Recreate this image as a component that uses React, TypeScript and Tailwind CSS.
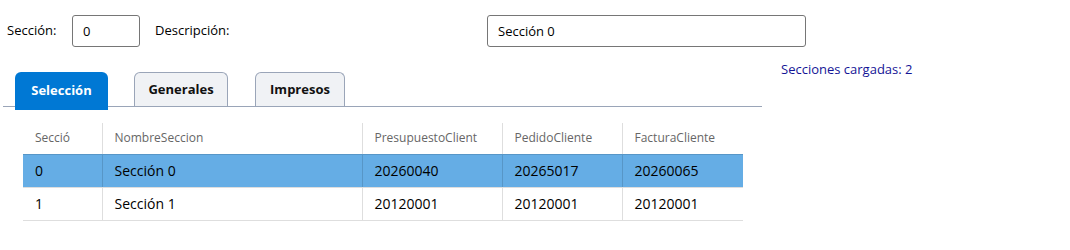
import React from 'react';

const rows = [
  { id: '0', nombre: 'Sección 0', presupuesto: '20260040', pedido: '20265017', factura: '20260065' },
  { id: '1', nombre: 'Sección 1', presupuesto: '20120001', pedido: '20120001', factura: '20120001' },
];

export default function App() {
  const selected = '0';

  return (
    <div className="w-[1070px] h-[250px] bg-white text-black font-['Open_Sans',sans-serif] text-[13px] overflow-hidden">
      {/* cabecera */}
      <div className="flex items-center pt-[15px] pl-[7px] h-[47px]">
        <span className="w-[65px]">Sección:</span>
        <input
          readOnly
          value="0"
          className="w-[68px] h-[32px] border border-[#767676] rounded-[3px] px-[10px] text-[13px] outline-none"
        />
        <span className="ml-[15px] w-[332px]">Descripción:</span>
        <input
          readOnly
          value="Sección 0"
          className="w-[319px] h-[32px] border border-[#767676] rounded-[3px] px-[10px] text-[13px] outline-none"
        />
      </div>

      <div className="flex">
        <div className="ml-[3px] w-[759px] pt-[25px]">
          {/* tabs */}
          <div className="flex items-end h-[35px] border-b border-[#9aa5b8]">
            <div className="ml-[12px] w-[93px] h-[38px] -mb-[4px] bg-[#0078d4] rounded-t-[6px] text-white font-bold flex items-center justify-center pb-[1px]">
              Selección
            </div>
            <div className="ml-[26px] w-[94px] h-[34px] bg-[#f0f2f5] border border-b-0 border-[#9aa5b8] rounded-t-[6px] font-bold text-[#111] flex items-center justify-center pt-[1px]">
              Generales
            </div>
            <div className="ml-[27px] w-[90px] h-[34px] bg-[#f0f2f5] border border-b-0 border-[#9aa5b8] rounded-t-[6px] font-bold text-[#111] flex items-center justify-center pt-[1px]">
              Impresos
            </div>
          </div>

          {/* tabla */}
          <table className="ml-[20px] mt-[16px] w-[720px] border-collapse table-fixed">
            <colgroup>
              <col className="w-[79px]" />
              <col className="w-[260px]" />
              <col className="w-[140px]" />
              <col className="w-[120px]" />
              <col className="w-[121px]" />
            </colgroup>
            <thead>
              <tr className="h-[31px] border-b border-black/[0.13]">
                <th className="px-3 text-left font-normal text-[12px] text-[#666]">Secció</th>
                <th className="px-3 text-left font-normal text-[12px] text-[#666] border-l border-black/[0.13]">NombreSeccion</th>
                <th className="px-3 text-left font-normal text-[12px] text-[#666] border-l border-black/[0.13]">PresupuestoClient</th>
                <th className="px-3 text-left font-normal text-[12px] text-[#666] border-l border-black/[0.13]">PedidoCliente</th>
                <th className="px-3 text-left font-normal text-[12px] text-[#666] border-l border-black/[0.13]">FacturaCliente</th>
              </tr>
            </thead>
            <tbody>
              {rows.map((r) => (
                <tr
                  key={r.id}
                  className={`h-[33px] border-b border-black/[0.13] text-[14px] ${r.id === selected ? 'bg-[#65ade5]' : ''}`}
                >
                  <td className="px-3">{r.id}</td>
                  <td className="px-3 border-l border-black/[0.13]">{r.nombre}</td>
                  <td className="px-3 border-l border-black/[0.13]">{r.presupuesto}</td>
                  <td className="px-3 border-l border-black/[0.13]">{r.pedido}</td>
                  <td className="px-3 border-l border-black/[0.13]">{r.factura}</td>
                </tr>
              ))}
            </tbody>
          </table>
        </div>

        <div className="ml-[19px] pt-[13px] text-[#141496]">Secciones cargadas: 2</div>
      </div>
    </div>
  );
}
